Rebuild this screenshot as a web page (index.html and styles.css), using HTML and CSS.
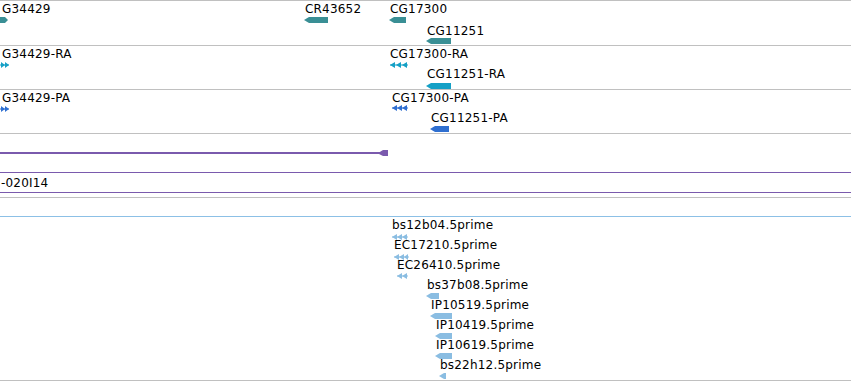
FILE: index.html
```html
<!DOCTYPE html>
<html>
<head>
<meta charset="utf-8">
<link rel="stylesheet" href="styles.css">
</head>
<body>
<div class="view">
  <div class="track t-gene t-first">
    <div class="feat" style="left:2px;top:2px"><span class="lbl">G34429</span></div>
    <svg class="glyph" style="left:-2px;top:16px" width="12" height="6"><polygon class="c-gene" points="0,0 7,0 10,3 7,6 0,6"/></svg>
    <div class="feat" style="left:305px;top:2px"><span class="lbl">CR43652</span></div>
    <svg class="glyph" style="left:304px;top:16px" width="25" height="6"><polygon class="c-gene" points="0,3 5,0 24,0 24,6 5,6"/></svg>
    <div class="feat" style="left:390px;top:2px"><span class="lbl">CG17300</span></div>
    <svg class="glyph" style="left:389px;top:16px" width="18" height="6"><polygon class="c-gene" points="0,3 5,0 17,0 17,6 5,6"/></svg>
    <div class="feat" style="left:427px;top:24px"><span class="lbl">CG11251</span></div>
    <svg class="glyph" style="left:426px;top:37px" width="26" height="6"><polygon class="c-gene" points="0,3 5,0 25,0 25,6 5,6"/></svg>
  </div>
  <div class="track t-gene">
    <div class="feat" style="left:2px;top:2px"><span class="lbl">G34429-RA</span></div>
    <svg class="glyph" style="left:-1px;top:16px" width="12" height="6"><g class="c-mrna"><rect x="0" y="2.5" width="10" height="1"/><polygon points="2,0 6,3 2,6"/><polygon points="6,0 10,3 6,6"/></g></svg>
    <div class="feat" style="left:390px;top:2px"><span class="lbl">CG17300-RA</span></div>
    <svg class="glyph" style="left:390px;top:16px" width="19" height="6"><g class="c-mrna"><rect x="0" y="2.5" width="18" height="1"/><polygon points="0,3 5,0 5,6"/><polygon points="6,3 11,0 11,6"/><polygon points="12,3 17,0 17,6"/></g></svg>
    <div class="feat" style="left:427px;top:22px"><span class="lbl">CG11251-RA</span></div>
    <svg class="glyph" style="left:426px;top:37px" width="26" height="6"><polygon class="c-mrna" points="0,3 5,0 25,0 25,6 5,6"/></svg>
  </div>
  <div class="track t-gene">
    <div class="feat" style="left:2px;top:2px"><span class="lbl">G34429-PA</span></div>
    <svg class="glyph" style="left:-1px;top:16px" width="12" height="6"><g class="c-prot"><rect x="0" y="2.5" width="10" height="1"/><polygon points="2,0 6,3 2,6"/><polygon points="6,0 10,3 6,6"/></g></svg>
    <div class="feat" style="left:392px;top:2px"><span class="lbl">CG17300-PA</span></div>
    <svg class="glyph" style="left:392px;top:15px" width="17" height="6"><g class="c-prot"><rect x="0" y="2.5" width="16" height="1"/><polygon points="0,3 5,0 5,6"/><polygon points="5,3 10,0 10,6"/><polygon points="10,3 15,0 15,6"/></g></svg>
    <div class="feat" style="left:431px;top:22px"><span class="lbl">CG11251-PA</span></div>
    <svg class="glyph" style="left:430px;top:36px" width="20" height="6"><polygon class="c-prot" points="0,3 5,0 19,0 19,6 5,6"/></svg>
  </div>
  <div class="track t-clone">
    <svg class="glyph" style="left:0;top:16px" width="390" height="8"><g class="c-clone"><rect x="0" y="2" width="384" height="2"/><polygon points="379,2.5 383,0 388,0 388,6 383,6 379,4"/></g></svg>
  </div>
  <div class="track t-span">
    <span class="lbl span-lbl">-020I14</span>
  </div>
  <div class="t-gap"></div>
  <div class="track t-est">
    <div class="est-top"></div>
    <div class="est-body">
      <div class="feat" style="left:392px;top:2px"><span class="lbl">bs12b04.5prime</span></div>
      <svg class="glyph" style="left:392px;top:17px" width="17" height="6"><g class="c-est"><rect x="0" y="2.5" width="16" height="1"/><polygon points="0,3 5,0 5,6"/><polygon points="5,3 10,0 10,6"/><polygon points="10,3 15,0 15,6"/></g></svg>
      <div class="feat" style="left:394px;top:22px"><span class="lbl">EC17210.5prime</span></div>
      <svg class="glyph" style="left:394px;top:37px" width="16" height="6"><g class="c-est"><rect x="0" y="2.5" width="15" height="1"/><polygon points="0,3 5,0 5,6"/><polygon points="5,3 10,0 10,6"/><polygon points="10,3 14,0 14,6"/></g></svg>
      <div class="feat" style="left:397px;top:42px"><span class="lbl">EC26410.5prime</span></div>
      <svg class="glyph" style="left:397px;top:56px" width="12" height="6"><g class="c-est"><rect x="0" y="2.5" width="11" height="1"/><polygon points="0,3 5,0 5,6"/><polygon points="5,3 10,0 10,6"/></g></svg>
      <div class="feat" style="left:427px;top:62px"><span class="lbl">bs37b08.5prime</span></div>
      <svg class="glyph" style="left:426px;top:76px" width="14" height="6"><polygon class="c-est" points="0,3 5,0 13,0 13,6 5,6"/></svg>
      <div class="feat" style="left:431px;top:82px"><span class="lbl">IP10519.5prime</span></div>
      <svg class="glyph" style="left:430px;top:96px" width="23" height="6"><polygon class="c-est" points="0,3 5,0 22,0 22,6 5,6"/></svg>
      <div class="feat" style="left:436px;top:102px"><span class="lbl">IP10419.5prime</span></div>
      <svg class="glyph" style="left:435px;top:116px" width="18" height="6"><polygon class="c-est" points="0,3 5,0 17,0 17,6 5,6"/></svg>
      <div class="feat" style="left:436px;top:122px"><span class="lbl">IP10619.5prime</span></div>
      <svg class="glyph" style="left:435px;top:136px" width="18" height="6"><polygon class="c-est" points="0,3 5,0 17,0 17,6 5,6"/></svg>
      <div class="feat" style="left:440px;top:142px"><span class="lbl">bs22h12.5prime</span></div>
      <svg class="glyph" style="left:439px;top:156px" width="8" height="6"><polygon class="c-est" points="0,3 5,0 7,0 7,6 5,6"/></svg>
    </div>
  </div>
</div>
</body>
</html>
```
FILE: styles.css
```css
html, body {
  margin: 0;
  padding: 0;
  background: #fff;
}
body {
  width: 851px;
  height: 381px;
  overflow: hidden;
  font-family: "DejaVu Sans", sans-serif;
  font-size: 12px;
  letter-spacing: 0.2px;
  color: #000;
}
.view {
  display: flex;
  flex-direction: column;
}
.track {
  position: relative;
  border-top: 1px solid #c0c0c0;
  box-sizing: border-box;
  overflow: hidden;
  flex: none;
}
.t-gene { height: 44px; }
.t-gene.t-first { height: 45px; }
.t-clone { height: 39px; }
.t-span {
  height: 21px;
  border-top: 1px solid #7a5aad;
  border-bottom: 1px solid #7a5aad;
}
.t-gap { height: 4px; flex: none; }
.t-est {
  height: 184px;
  border-bottom: 1px solid #c0c0c0;
}
.est-top {
  height: 18px;
  border-bottom: 1px solid #8cc0e6;
}
.est-body {
  position: relative;
  height: 164px;
}
.feat {
  position: absolute;
  white-space: nowrap;
}
.lbl {
  display: block;
  line-height: 13px;
  white-space: nowrap;
}
.span-lbl {
  padding: 4px 0 0 1px;
}
.glyph {
  position: absolute;
  display: block;
}
.c-gene { fill: #3a8f95; }
.c-mrna { fill: #15a0c6; }
.c-prot { fill: #2f6fd0; }
.c-clone { fill: #7a5aad; }
.c-est { fill: #8abde2; }
```
